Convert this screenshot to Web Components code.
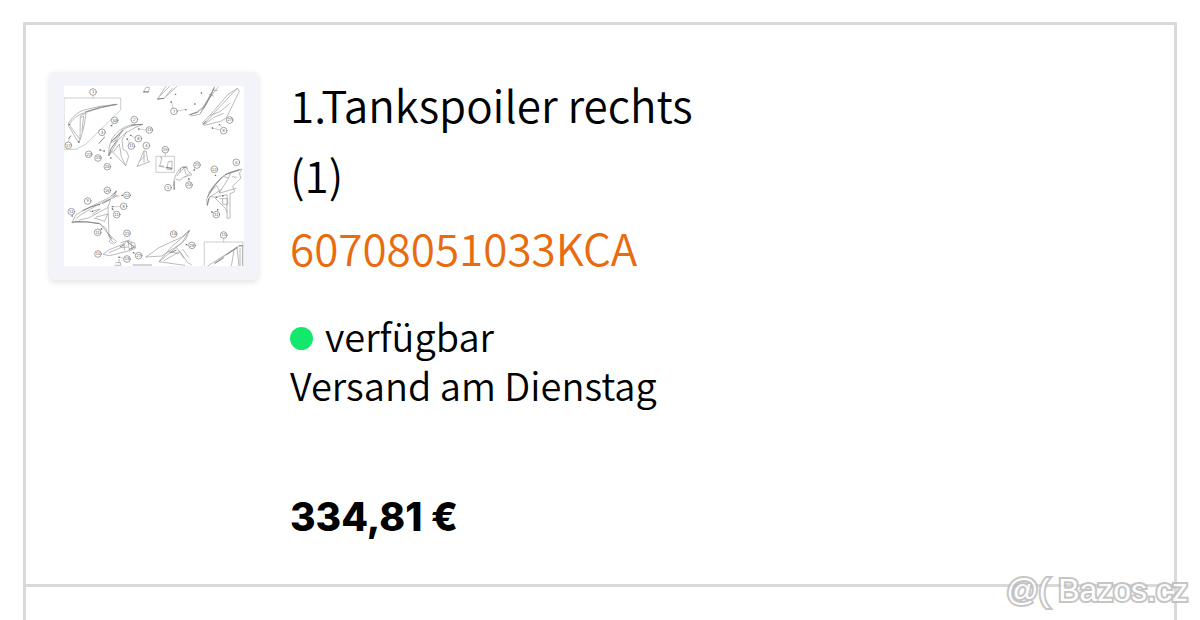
<!DOCTYPE html>
<html lang="de">
<head>
<meta charset="utf-8">
<meta name="viewport" content="width=device-width, initial-scale=1">
<title>Tankspoiler rechts</title>
<style>
  body { margin: 0; background: #fff; color: #000; font-family: "Noto Sans CJK JP", "Noto Sans", sans-serif; overflow: hidden; }
</style>
</head>
<body>
<product-list>
  <product-card sku="60708051033KCA">
    <parts-diagram slot="image"></parts-diagram>
    <span slot="name">1.Tankspoiler rechts<br>(1)</span>
    <stock-status slot="stock">verfügbar<br>Versand am Dienstag</stock-status>
    <span slot="price">334,81 €</span>
  </product-card>
</product-list>
<site-watermark>@( Bazos.cz</site-watermark>

<script>
class ProductList extends HTMLElement {
  constructor() {
    super();
    this.attachShadow({ mode: 'open' }).innerHTML = `
      <style>
        :host { display: flex; flex-direction: column; box-sizing: border-box; min-height: 100vh; padding: 22px 23px 0 23px; }
        .list { flex: 1; border: 3px solid #d9d9d9; border-bottom: 0; }
      </style>
      <div class="list"><slot></slot></div>`;
  }
}

class ProductCard extends HTMLElement {
  constructor() {
    super();
    this.attachShadow({ mode: 'open' }).innerHTML = `
      <style>
        :host { display: flex; align-items: flex-start; gap: 32px; padding: 44px 24px 42px; border-bottom: 3px solid #d9d9d9; }
        .thumb { flex: none; margin-top: 3px; padding: 14px; background: #f3f4fa; border-radius: 4px; box-shadow: 0 2px 6px rgba(0,0,0,.12); }
        .info { flex: 1; min-width: 0; }
        h2, a { font-size: 44px; font-weight: 350; }
        h2 { margin: 0; line-height: 70px; }
        a { display: block; width: fit-content; margin-top: 2px; line-height: 72px; color: #e96b10; text-decoration: none; }
        .stock { margin-top: 28px; }
        .price { margin: 82px 0 0; font: 800 39px/51px Inter, sans-serif; }
      </style>
      <div class="thumb"><slot name="image"></slot></div>
      <div class="info">
        <h2><slot name="name"></slot></h2>
        <a href="#"></a>
        <div class="stock"><slot name="stock"></slot></div>
        <p class="price"><slot name="price"></slot></p>
      </div>`;
  }
  connectedCallback() {
    this.shadowRoot.querySelector('a').textContent = this.getAttribute('sku');
  }
}

class StockStatus extends HTMLElement {
  constructor() {
    super();
    this.attachShadow({ mode: 'open' }).innerHTML = `
      <style>
        :host { display: block; font-size: 38px; line-height: 49px; font-weight: 350; }
        i { display: inline-block; width: 23px; height: 23px; margin-right: 12px; border-radius: 50%; background: #14e86c; vertical-align: 2px; }
      </style>
      <i></i><slot></slot>`;
  }
}

/* Callout bubbles: number, x, y */
const CALLOUTS = [
  [1,159,96],[34,224,181],[2,283,179],[3,186,217],[13,328,210],[8,295,236],[11,274,258],[4,319,257],
  [17,85,256],[22,146,283],[23,174,294],[26,202,320],[7,402,154],[27,569,180],[8,551,212],[19,376,269],
  [21,471,315],[5,384,383],[24,447,375],[12,523,328],[6,589,307],[16,202,391],[12,261,406],[9,143,423],
  [8,251,439],[11,94,455],[11,230,464],[11,173,517],[21,261,520],[10,174,582],[13,261,597],[27,296,587],
  [14,401,522],[28,456,556],[11,529,464],[15,551,525]
];

class PartsDiagram extends HTMLElement {
  constructor() {
    super();
    const bubbles = CALLOUTS.map(([n, x, y]) =>
      `<circle cx="${x}" cy="${y}" r="10"/><text x="${x}" y="${y + 4}">${n}</text>`).join('');
    this.attachShadow({ mode: 'open' }).innerHTML = `
      <style>
        :host { display: block; width: 180px; height: 180px; background: #fff; }
        svg { display: block; width: 100%; height: 100%; }
        text { font: 12px "Liberation Sans", sans-serif; text-anchor: middle; fill: #555; stroke: none; }
      </style>
      <svg viewBox="72 78 540 540" fill="none" stroke="#999" stroke-width="2" stroke-linejoin="round" stroke-linecap="round" role="img" aria-label="Teilezeichnung">
        <g stroke="#b4b4b4">
          <path d="M159 106V114M73 114H242V150L136 254L108 268H73Z"/>
          <path d="M551 535V546M493 618V546H609V618M376 279V289M349 289H403V337H349Z"/>
          <path d="M214 198L220 190M296 207L318 210M272 226L286 234M262 238L268 248M180 270L190 273M92 228L84 246M184 506L176 510M412 152L437 149M394 126L399 144M517 204L541 210M538 194L548 203M246 406H251M217 440H241M217 446L223 456M447 357V365M462 331L465 325M515 456L521 460M533 449L531 454M438 554L446 556M236 590L251 596M280 578L286 582"/>
        </g>
        <g>
          <path d="M88 192Q107 163 136 158Q180 142 232 133Q180 136 132 150Q108 156 86 188Q83 200 90 204L116 249Q132 213 138 160L121 167L120 238L90 198M123 173L131 168L126 213" />
          <path d="M206 287Q204 260 216 236Q235 206 268 196L309 193Q278 204 254 221Q233 236 222 261L207 287M220 240L250 207L286 194M206 287L216 274L257 317L266 289L260 274L249 268L246 240L259 216M257 317L244 290L238 252L220 276M224 239L240 224L248 212M212 248L230 240L240 224"/>
          <path d="M292 319L312 272L319 274L323 302L329 305L292 319M312 274V307M300 302L314 288"/>
          <path d="M310 96L318 82L328 82L326 96ZM353 117L378 78M353 117L372 115L411 79M359 108L388 80M378 108L398 84"/>
          <path d="M447 165L470 156Q492 144 510 108L524 80M452 168L479 163Q499 137 509 114L535 80M472 157L490 143L514 98M482 160L488 145M508 104L520 108M518 90L532 92"/>
          <path d="M490 194L592 84L598 94L559 174L542 184L492 196L488 188L515 160L564 103L590 87M495 192L520 173L550 160M512 166L540 155L570 130"/>
          <path d="M361 292L366 293L359 318L372 322M357 319L371 318M382 325L384 306L396 303V330L380 327M378 323H394"/>
          <path d="M404 388L401 371Q404 342 421 325L440 319L443 332L456 344L432 351L420 361L408 358M412 347L420 334L432 325L438 343M422 324L420 337M435 352L450 337"/>
          <path d="M502 436L500 418Q512 382 549 349L567 338L606 327L598 340L603 354L578 378L584 395L570 401V474L561 475V404L526 411L510 410L502 436M506 398Q527 365 556 344L598 331M550 349L566 354L537 400M566 354L571 341M512 395L531 377L540 399L588 385M540 416H563V433H548V417M525 414L555 444L561 456M508 412L545 388M577 350L590 352"/>
          <path d="M96 487L107 466L129 451L209 412L229 393L226 405L213 415L204 441L207 525L180 490L145 486ZM108 476L124 463L189 426L212 416M118 480L145 474L178 456L203 443M150 455L181 447L158 462M163 474L194 484L203 462L169 471M178 491L197 504L211 538L224 550L229 545L206 521M211 539L207 544L219 552M215 408H237M218 415L232 406"/>
          <path d="M190 582L208 569L253 551L260 543L284 549L287 564L269 572L209 587ZM208 578L242 563L263 561M252 551L254 570M264 543L268 570M273 545L276 568M243 548L270 540M237 598V608M227 608H242V616H225"/>
          <path d="M318 591L357 563L424 532L448 511L438 537L395 574L357 605L434 616M318 591L365 588L426 549L448 511M357 605L394 561L440 521M372 602L420 574L442 607L454 614M410 563L431 594M384 575L415 580M428 568L446 592"/>
          <path d="M503 618L597 558L607 556V618M524 609L591 561L597 618M582 571L574 618M600 566V618"/>
        </g>
        <g stroke="#888" stroke-width="3">
          <path d="M136 156Q180 139 228 133M206 285L214 265L230 242M214 244L238 222L250 210M274 195L307 193M177 250L194 231M92 228L86 235M97 487L108 484L143 486L177 491M129 452L150 442L174 434M188 430L209 419M221 404L229 393M207 525L215 537M502 434L506 416M503 410Q517 381 546 352M557 343L598 329M450 164L471 157M490 145L512 108L522 84M353 117L371 115M490 192L497 184M402 388L403 365M428 321L440 324M263 547L284 561L268 568M241 560L252 555M379 322L395 326M444 517L448 513M391 578L408 571M598 557H607M525 610L550 594M560 584L592 563M312 95H324"/>
        </g>
        <g stroke="#666" stroke-width="4">
          <path d="M214 197h1M296 207h1M272 226h1M261 237h1M180 270h1M192 273h1M212 294h1M406 103h1M393 126h1M437 149h1M484 99h1M464 132h1M517 204h1M538 194h1M246 406h1M217 440h1M217 447h1M184 507h1M462 330h1M446 357h1M526 346h1M515 456h1M533 449h1M529 412h1M548 408h1M439 554h1M177 434h1M157 454h1M96 468h1M280 578h1M237 592h1M88 194h1M116 246h1"/>
        </g>
        <path d="M279 615H335" stroke="#aaa" stroke-width="3"/>
        <g fill="#fff" stroke="#777">${bubbles}</g>
      </svg>`;
  }
}

class SiteWatermark extends HTMLElement {
  constructor() {
    super();
    this.attachShadow({ mode: 'open' }).innerHTML = `
      <style>
        :host { position: absolute; right: 12px; bottom: 11px; font: 32px/37px "Liberation Sans", sans-serif;
          color: #fff; -webkit-text-stroke: 4px #bbb; paint-order: stroke fill; opacity: .85; white-space: nowrap; }
      </style>
      <slot></slot>`;
  }
}

customElements.define('product-list', ProductList);
customElements.define('product-card', ProductCard);
customElements.define('stock-status', StockStatus);
customElements.define('parts-diagram', PartsDiagram);
customElements.define('site-watermark', SiteWatermark);
</script>
</body>
</html>
